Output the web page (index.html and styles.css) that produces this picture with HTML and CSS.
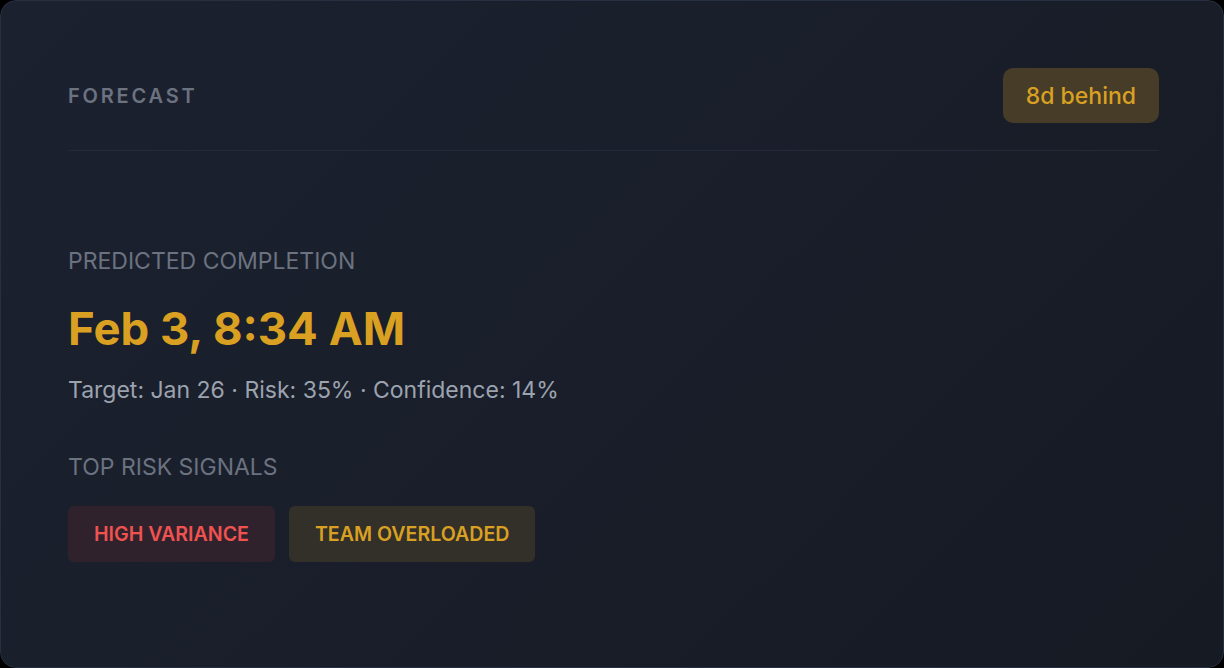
FILE: index.html
```html
<!DOCTYPE html>
<html lang="en">
  <head>
    <meta charset="UTF-8" />
    <meta name="viewport" content="width=device-width, initial-scale=1.0" />
    <title>Forecast</title>
    <link rel="stylesheet" href="styles.css">
  </head>
  <body>
    <div class="card">
      <div class="card-head">
        <h2 class="title">FORECAST</h2>
        <span class="badge">8d behind</span>
      </div>

      <div class="card-body">
        <p class="label">PREDICTED COMPLETION</p>
        <p class="date">Feb 3, 8:34 AM</p>
        <p class="meta">Target: Jan 26 · Risk: 35% · Confidence: 14%</p>

        <p class="label signals-label">TOP RISK SIGNALS</p>
        <div class="chips">
          <span class="chip chip-red">HIGH VARIANCE</span>
          <span class="chip chip-amber">TEAM OVERLOADED</span>
        </div>
      </div>
    </div>
  </body>
</html>
```

FILE: styles.css
```css
body {
  margin: 0;
  background: #000;
  font-family: Inter, "Noto Sans", sans-serif;
}

.card {
  box-sizing: border-box;
  width: 1224px;
  height: 668px;
  padding: 67px 64px 0 67px;
  border: 1px solid #263040;
  border-radius: 16px;
  background: linear-gradient(135deg, #1c2130 0%, #191e2a 50%, #161a23 100%);
}

.card-head {
  display: flex;
  align-items: center;
  justify-content: space-between;
  padding-bottom: 27px;
  border-bottom: 1px solid #242a37;
}

.title {
  margin: 0;
  font-size: 20px;
  font-weight: 600;
  letter-spacing: 2.8px;
  color: #6b7280;
  line-height: 26px;
  padding-top: 1px;
}

.badge {
  display: inline-flex;
  align-items: center;
  height: 55px;
  padding: 0 23px;
  box-sizing: border-box;
  border-radius: 10px;
  background: #463c28;
  color: #d9a021;
  font-size: 23px;
  font-weight: 500;
}

.card-body {
  padding-top: 96px;
}

.card-body p {
  margin: 0;
}

.label {
  font-size: 23px;
  color: #6b7280;
  line-height: 28px;
}

.date {
  margin-top: 26px !important;
  font-size: 45.5px;
  font-weight: 700;
  color: #d9a021;
  line-height: 56px;
}

.meta {
  margin-top: 18px !important;
  font-size: 23px;
  color: #9ca3af;
  line-height: 30px;
}

.signals-label {
  margin-top: 48px !important;
}

.chips {
  display: flex;
  gap: 14px;
  margin-top: 25px;
}

.chip {
  display: inline-flex;
  align-items: center;
  height: 56px;
  padding: 0 26px;
  box-sizing: border-box;
  border-radius: 6px;
  font-size: 19.6px;
  font-weight: 600;
}

.chip-red {
  background: #2f222d;
  color: #f0524f;
}

.chip-amber {
  background: #33302a;
  color: #d9a021;
}
```
